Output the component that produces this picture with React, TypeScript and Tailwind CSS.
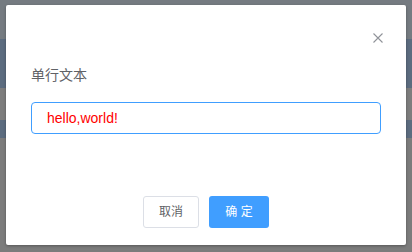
import React from "react";

export default function App() {
  const font = { fontFamily: '"Liberation Sans", "Noto Sans CJK SC", sans-serif' };
  return (
    <div className="relative w-[412px] h-[252px] overflow-hidden" style={font}>
      <div className="flex flex-col h-full">
        <div className="h-[39px] bg-[#757b81]" />
        <div className="h-[49px] bg-[#5c6c7f]" />
        <div className="h-[32px] bg-[#7d7d7d]" />
        <div className="h-[18px] bg-[#5c6c7f]" />
        <div className="flex-1 bg-[#7c7c7c]" />
      </div>
      <div className="absolute left-[6px] top-[5px] w-[400px] h-[240px] bg-white rounded-[2px] shadow-[0_1px_3px_rgba(0,0,0,0.3)] flex flex-col">
        <div className="flex justify-end pt-[24px] pr-[23px] h-[58px]">
          <svg width="10" height="10" viewBox="0 0 10 10" className="mt-[4px]">
            <path d="M0.5 0.5 L9.5 9.5 M9.5 0.5 L0.5 9.5" stroke="#909399" strokeWidth="1.1" fill="none" />
          </svg>
        </div>
        <div className="px-[25px] flex flex-col">
          <div className="text-[14px] leading-[20px] text-[#606266] h-[20px] mt-[2px]">单行文本</div>
          <div className="mt-[17px] h-[32px] w-[350px] border border-[#409eff] rounded-[4px] flex items-center pl-[15px] text-[14px] text-[#ff0000]">
            hello,world!
          </div>
        </div>
        <div className="flex justify-center gap-[10px] mt-[62px]">
          <button className="w-[56px] h-[32px] border border-[#dcdfe6] rounded-[3px] bg-white text-[12px] text-[#606266]">取消</button>
          <button className="w-[60px] h-[32px] rounded-[3px] bg-[#409eff] text-[12px] text-white">确 定</button>
        </div>
      </div>
    </div>
  );
}
